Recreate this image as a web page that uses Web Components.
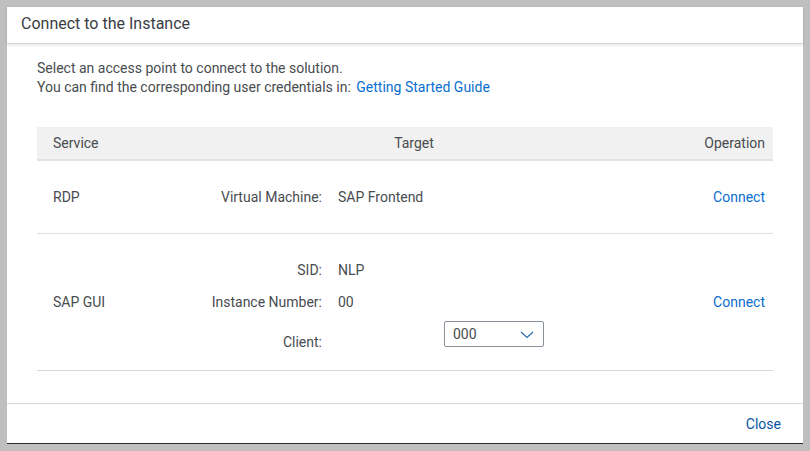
<!DOCTYPE html>
<html lang="en">
<head>
<meta charset="utf-8">
<title>Connect to the Instance</title>
<style>
html, body { height: 100%; margin: 0; }
body {
  box-sizing: border-box;
  padding: 7px;
  background: #bfbfbf;
  color: #484c50;
  font: 14px/19px Roboto, "Liberation Sans", sans-serif;
  display: flex;
}
</style>
</head>
<body>
<app-dialog>
  <span slot="title">Connect to the Instance</span>
  <intro-text></intro-text>
  <access-table></access-table>
  <close-button slot="footer">Close</close-button>
</app-dialog>

<script>
function define(name, html) {
  const template = document.createElement('template');
  template.innerHTML = html;
  customElements.define(name, class extends HTMLElement {
    constructor() {
      super();
      this.attachShadow({ mode: 'open' }).append(template.content.cloneNode(true));
    }
  });
}

define('text-link', `
<style>
:host { display: inline; }
a { color: #0a6ed1; text-decoration: none; }
a:hover { text-decoration: underline; }
</style>
<a href="#"><slot></slot></a>`);

define('close-button', `
<style>
:host { display: block; }
button { font: inherit; color: #0854a0; background: none; border: 0; padding: 4px 8px; cursor: pointer; }
</style>
<button type="button"><slot></slot></button>`);

define('intro-text', `
<style>
:host { display: block; }
p { margin: 0; }
text-link { margin-left: 2px; }
</style>
<p>Select an access point to connect to the solution.</p>
<p>You can find the corresponding user credentials in: <text-link>Getting Started Guide</text-link></p>`);

define('field-row', `
<style>
:host { display: grid; grid-template-columns: 125px 1fr; column-gap: 16px; line-height: 20px; }
.label { text-align: right; white-space: nowrap; }
</style>
<span class="label"><slot name="label"></slot></span>
<span><slot></slot></span>`);

define('client-field', `
<style>
:host { display: grid; grid-template-columns: 125px 1fr; column-gap: 16px; line-height: 20px; }
label { text-align: right; padding-top: 11px; }
.box { position: relative; width: 100px; height: 26px; margin-left: 106px; }
select {
  appearance: none; box-sizing: border-box; width: 100%; height: 100%;
  margin: 0; padding: 0 30px 0 8px;
  font: inherit; color: inherit; background: #fff;
  border: 1px solid #89919a; border-radius: 2px;
}
svg { position: absolute; right: 10px; top: 9px; pointer-events: none; }
</style>
<label for="client">Client:</label>
<div class="box">
  <select id="client"><option>000</option></select>
  <svg width="14" height="9" viewBox="0 0 14 9" fill="none" stroke="#1f66ad" stroke-width="1.1"><path d="M1 2 7 7.500l6-5.500"/></svg>
</div>`);

define('access-table', `
<style>
:host { display: block; margin-top: 30px; }
table { width: 100%; border-collapse: separate; border-spacing: 0; table-layout: fixed; }
th { font-weight: 400; background: #f1f1f1; padding: 6px 8px; line-height: 20px; border-bottom: 2px solid #e3e3e3; }
th, td { text-align: left; }
td { padding: 0 8px; vertical-align: middle; border-bottom: 1px solid #e0e0e0; }
tr:last-child td { border-bottom-color: #d9d9d9; }
th:first-child, td:first-child { width: 160px; box-sizing: border-box; padding-left: 16px; }
th:nth-child(2) { text-align: center; }
th:last-child, td:last-child { width: 142px; box-sizing: border-box; text-align: right; }
td:nth-child(2) { padding: 26px 0; }
.stack { display: grid; gap: 12px; }
.stack client-field { margin-top: -3px; }
tbody tr:last-child td:nth-child(2) { padding-bottom: 18px; }
</style>
<table>
  <thead><tr><th scope="col">Service</th><th scope="col">Target</th><th scope="col">Operation</th></tr></thead>
  <tbody>
    <tr>
      <td>RDP</td>
      <td><field-row><span slot="label">Virtual Machine:</span>SAP Frontend</field-row></td>
      <td><text-link>Connect</text-link></td>
    </tr>
    <tr>
      <td>SAP GUI</td>
      <td><div class="stack">
        <field-row><span slot="label">SID:</span>NLP</field-row>
        <field-row><span slot="label">Instance Number:</span>00</field-row>
        <client-field></client-field>
      </div></td>
      <td><text-link>Connect</text-link></td>
    </tr>
  </tbody>
</table>`);

define('app-dialog', `
<style>
:host { display: flex; flex-direction: column; flex: 1; min-width: 0; background: #fff; border-bottom: 1px solid #2b2b2b; }
header { padding: 5px 14px 7px; border-bottom: 1px solid #d5d7d7; box-shadow: 0 1px 3px #0000001f; }
h1 { margin: 0; font-size: 16px; line-height: 24px; font-weight: 400; color: #393d41; }
main { flex: 1; padding: 15px 30px 0; }
footer { display: flex; justify-content: flex-end; padding: 7px 14px 5px; border-top: 1px solid #d9d9d9; }
</style>
<header><h1><slot name="title"></slot></h1></header>
<main><slot></slot></main>
<footer><slot name="footer"></slot></footer>`);
</script>
</body>
</html>
